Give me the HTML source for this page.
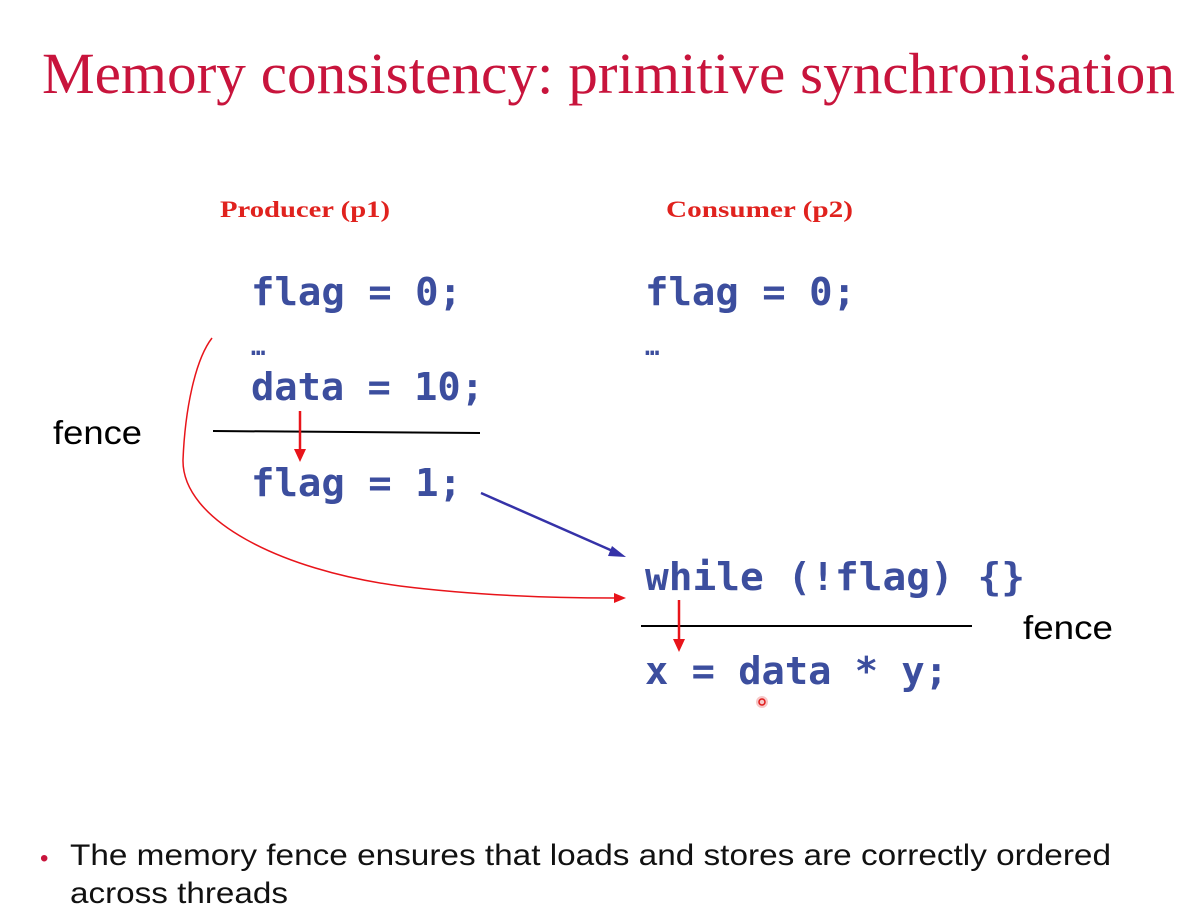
<!DOCTYPE html>
<html><head><meta charset="utf-8"><style>
html,body{margin:0;padding:0;background:#fff;}
svg{display:block}
</style></head><body>
<svg width="1201" height="921" viewBox="0 0 1201 921" xmlns="http://www.w3.org/2000/svg">
<text x="42" y="93" font-family="Liberation Serif, serif" font-size="58" fill="#c8143c" textLength="1133" lengthAdjust="spacingAndGlyphs">Memory consistency: primitive synchronisation</text>
<g font-family="Liberation Serif, serif" font-size="23" font-weight="bold" fill="#e0221e">
<text x="220" y="217" textLength="170" lengthAdjust="spacingAndGlyphs">Producer (p1)</text>
<text x="666" y="217" textLength="187" lengthAdjust="spacingAndGlyphs">Consumer (p2)</text>
</g>
<g font-family="DejaVu Sans Mono, Liberation Mono, monospace" font-size="38" font-weight="bold" fill="#3c4e9e">
<text x="251" y="305" textLength="211" lengthAdjust="spacingAndGlyphs">flag = 0;</text>
<text x="251" y="355" font-size="24">…</text>
<text x="251" y="400" textLength="233" lengthAdjust="spacingAndGlyphs">data = 10;</text>
<text x="251" y="496" textLength="211" lengthAdjust="spacingAndGlyphs">flag = 1;</text>
<text x="645" y="305" textLength="211" lengthAdjust="spacingAndGlyphs">flag = 0;</text>
<text x="645" y="355" font-size="24">…</text>
<text x="645" y="590" textLength="380" lengthAdjust="spacingAndGlyphs">while (!flag) {}</text>
<text x="645" y="684" textLength="303" lengthAdjust="spacingAndGlyphs">x = data * y;</text>
</g>
<line x1="213" y1="431" x2="480" y2="433" stroke="#000" stroke-width="2"/>
<line x1="641" y1="626" x2="972" y2="626" stroke="#000" stroke-width="2"/>
<g font-family="Liberation Sans, sans-serif" font-size="33" fill="#000">
<text x="53" y="444" textLength="89" lengthAdjust="spacingAndGlyphs">fence</text>
<text x="1023" y="639" textLength="90" lengthAdjust="spacingAndGlyphs">fence</text>
</g>
<g stroke="#e8141a" stroke-width="2.5" fill="#e8141a">
<line x1="300" y1="411" x2="300" y2="452"/>
<polygon points="294,449 306,449 300,462" stroke="none"/>
<line x1="679" y1="600" x2="679" y2="642"/>
<polygon points="673,639 685,639 679,652" stroke="none"/>
</g>
<path d="M212,338 C195,360 185,410 183,460 C182,520 280,570 400,586 C480,596 560,598 615,598" stroke="#e8141a" stroke-width="1.5" fill="none"/>
<polygon points="626,598 614,593 614,603" fill="#e8141a"/>
<line x1="481" y1="493" x2="615" y2="552" stroke="#3532a8" stroke-width="2.5"/>
<polygon points="626,557 612,546 608,556" fill="#3532a8"/>
<circle cx="762" cy="702" r="6" fill="#f6c8c8"/>
<circle cx="762" cy="702" r="3" fill="none" stroke="#e01a1a" stroke-width="1.5"/>
<text x="40" y="866" font-family="Liberation Sans, sans-serif" font-size="24" fill="#c8143c">•</text>
<g font-family="Liberation Sans, sans-serif" font-size="30" fill="#111">
<text x="70" y="865" textLength="1041" lengthAdjust="spacingAndGlyphs">The memory fence ensures that loads and stores are correctly ordered</text>
<text x="70" y="903" textLength="218" lengthAdjust="spacingAndGlyphs">across threads</text>
</g>
</svg>
</body></html>
